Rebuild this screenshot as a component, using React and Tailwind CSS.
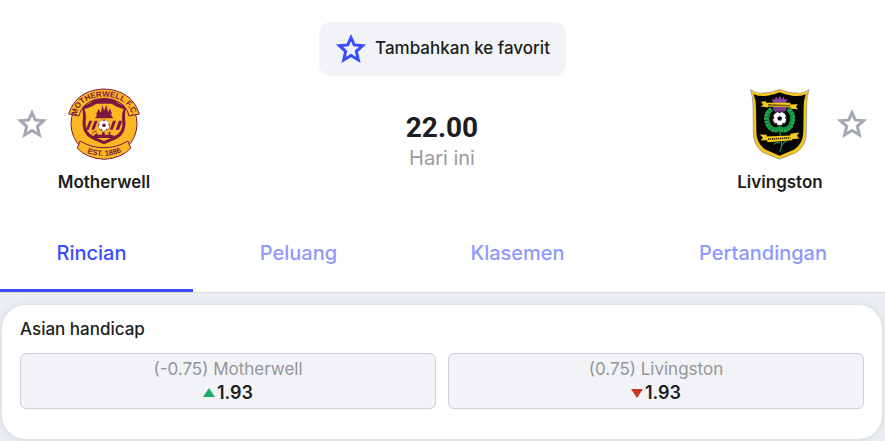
import React, { useState } from "react";

const TABS = ["Rincian", "Peluang", "Klasemen", "Pertandingan"];

function StarIcon({ className }) {
  return (
    <svg viewBox="0 0 30 30" className={className} fill="none" stroke="currentColor" strokeWidth="2.8" aria-hidden="true">
      <path d="M15 4.4 L18 11.2 L25.9 11.9 L20 17.2 L21.9 25.3 L15 21.1 L8.1 25.3 L10 17.2 L4.1 11.9 L12 11.2 Z" />
    </svg>
  );
}

function Ball({ x, y, r, color }) {
  return (
    <g transform={`translate(${x} ${y}) scale(${r / 20})`}>
      <circle r="20" fill="#fff" stroke={color} strokeWidth="1.5" />
      <path
        fill={color}
        d="M0 -7 L7 -2 L4 6 L-4 6 L-7 -2 Z M-6 -19 L6 -19 L0 -15 Z M19 -7 L20 4 L15 -3 Z M-19 -7 L-20 4 L-15 -3 Z M14 15 L6 19 L9 12 Z M-14 15 L-6 19 L-9 12 Z"
      />
    </g>
  );
}

function MotherwellCrest() {
  const dark = "#7d1742";
  const gold = "#fbb822";
  return (
    <svg viewBox="24 27 216 216" className="size-18" role="img" aria-label="Motherwell F.C.">
      <circle cx="132" cy="134" r="99" fill={gold} stroke={dark} strokeWidth="3" />
      <path d="M62 82 Q84 80 104 60 H160 Q180 80 202 82 Q192 96 196 126 Q200 166 164 182 L132 196 L100 182 Q64 166 68 126 Q72 96 62 82 Z" fill={dark} />
      <path d="M73 90 Q94 86 112 72 H152 Q170 86 191 90 Q184 104 187 128 Q190 160 160 174 L132 186 L104 174 Q74 160 77 128 Q80 104 73 90 Z" fill={gold} />
      <path d="M96 66 Q132 52 168 66 L156 74 H108 Z" fill={dark} />
      <path d="M105 118 L112 106 H108 L116 90 L122 101 L128 78 L132 96 L139 78 L144 100 L150 88 L156 105 H152 L160 118 Z" fill={dark} />
      <g fill={dark}>
        <path d="M77 152 L88 125 H97 L86 152 Z M94 152 L104 125 H113 L103 152 Z M149 152 L159 125 H168 L158 152 Z M167 152 L177 125 H187 L177 152 Z" />
        <path d="M98 173 L109 162 L114 167 H126 V160 H134 V167 H146 V158 H151 V167 L164 170 L158 177 H104 Z" />
      </g>
      <path d="M96 163 Q103 154 110 158" fill="none" stroke={dark} strokeWidth="3" />
      <Ball x={132} y={139} r={17} color={dark} />
      <path d="M26 105 Q49 33 132 30 Q215 33 238 105 L207 111 Q205 94 189 78 Q166 59 132 58 Q98 59 75 78 Q59 94 57 111 Z" fill={gold} stroke={dark} strokeWidth="3" />
      <path d="M60 186 Q96 207 132 206 Q168 207 204 186 L212 208 Q184 238 132 241 Q80 238 52 208 Z" fill={gold} stroke={dark} strokeWidth="3" />
      <path id="crest-top" d="M50 109 Q60 56 132 53 Q204 56 216 109" fill="none" />
      <path id="crest-bottom" d="M76 220 Q132 243 190 217" fill="none" />
      <text fill={dark} fontSize="24" fontWeight="700" fontFamily="Liberation Sans, sans-serif" textAnchor="middle">
        <textPath href="#crest-top" startOffset="50%">MOTHERWELL F.C.</textPath>
      </text>
      <text fill={dark} fontSize="23" fontWeight="700" fontFamily="Liberation Sans, sans-serif" textAnchor="middle">
        <textPath href="#crest-bottom" startOffset="50%">EST. 1886</textPath>
      </text>
    </svg>
  );
}

function LivingstonCrest() {
  return (
    <svg viewBox="32 25 180 213" className="h-18 w-15" role="img" aria-label="Livingston">
      <path d="M33 28 Q49 41 66 39 Q94 39 121 28 Q148 39 176 39 Q193 41 209 28 Q202 48 202 78 L201 155 Q202 196 171 217 L121 237 L71 217 Q41 196 42 155 L41 78 Q41 48 33 28 Z" fill="#f4c51d" stroke="#8a8a80" strokeWidth="2" />
      <path d="M43 42 Q61 50 84 47 Q106 43 121 36 Q136 43 158 47 Q181 50 199 42 Q193 60 193 82 L192 155 Q192 190 165 208 L121 227 L78 208 Q51 190 51 155 L50 82 Q50 60 43 42 Z" fill="#050505" />
      <path d="M98 55 L106 59 L110 49 L116 57 L121 47 L127 57 L133 49 L136 59 L144 55 Q141 68 137 73 H105 Q100 67 98 55 Z" fill="#8746a0" />
      <path d="M102 78 H141 Q145 90 134 95 H108 Q97 90 102 78 Z" fill="#75398f" />
      <path d="M97 87 Q70 104 88 139 Q105 157 121 146 Q137 157 154 139 Q172 104 145 87" fill="none" stroke="#22a84c" strokeWidth="13" strokeDasharray="9 1" />
      <path d="M98 89 Q78 108 93 136 Q107 151 121 140 Q135 151 149 136 Q164 108 144 89" fill="none" stroke="#15913d" strokeWidth="6" />
      <path d="M119 148 Q127 178 127 194 Q127 207 121 215 M121 188 Q110 185 103 192 M126 197 Q134 184 143 181" fill="none" stroke="#188344" strokeWidth="4" />
      <Ball x={121} y={115} r={21} color="#050505" />
      <path d="M64 65 L80 63 L80 68 H153 V73 L176 72 L170 80 L176 87 L154 86 V82 L87 79 V82 L64 78 L72 73 Z" fill="#f6cb1b" />
      <path d="M61 163 L82 164 V169 L153 166 V161 L180 157 L173 167 L180 175 L158 177 V180 L84 186 V180 L64 181 L71 173 Z" fill="#f6cb1b" />
      <path d="M87 74 L151 77 M86 177 L153 173" stroke="#382c05" strokeWidth="5" strokeDasharray="4 2" />
    </svg>
  );
}

function Team({ name, crest, reversed }) {
  return (
    <div className={reversed ? "flex flex-row-reverse" : "flex"}>
      <button type="button" aria-label={`Favorit ${name}`} className="mt-5 flex h-8 w-8 items-center justify-center text-[#a3a8b4]">
        <StarIcon className="size-8" />
      </button>
      <div className="flex w-28 flex-col items-center gap-2">
        {crest}
        <h2 className="text-[17px] leading-7 font-semibold">{name}</h2>
      </div>
    </div>
  );
}

function Odds({ label, value, up }) {
  return (
    <button type="button" className="flex h-14 flex-col items-center justify-center rounded-md border border-[#cfd1d8] bg-[#f2f3f7] leading-6">
      <span className="text-[17px] text-[#949599]">{label}</span>
      <span className="flex h-6 items-center gap-0.5 text-lg leading-6 font-semibold">
        <svg viewBox="0 0 12 10" className="h-2.5 w-3" aria-hidden="true">
          {up ? <path d="M6 0 L12 9 H0 Z" fill="#1cae68" /> : <path d="M0 1 H12 L6 10 Z" fill="#cc3520" />}
        </svg>
        {value}
      </span>
    </button>
  );
}

export default function App() {
  const [active, setActive] = useState("Rincian");
  return (
    <div className="min-h-screen bg-[#ebeef3] font-[Inter,Roboto,sans-serif] text-[#1c1d21]">
      <header className="border-b border-[#d9dadd] bg-white pt-[22px]">
        <div className="flex justify-center">
          <button type="button" className="flex h-[54px] items-center gap-2 rounded-xl bg-[#f2f3f7] px-4 text-[17px] font-medium">
            <StarIcon className="size-8 text-[#384eff]" />
            Tambahkan ke favorit
          </button>
        </div>
        <div className="flex items-start justify-between pt-3 pr-[17px] pl-4">
          <Team name="Motherwell" crest={<MotherwellCrest />} />
          <div className="flex flex-col items-center pt-6">
            <time className="font-[Roboto,sans-serif] text-[28px] leading-8 font-bold">22.00</time>
            <span className="text-xl leading-7 text-[#999a9e]">Hari ini</span>
          </div>
          <Team name="Livingston" crest={<LivingstonCrest />} reversed />
        </div>
        <nav className="mt-4 grid h-20 grid-cols-[193fr_211fr_227fr_254fr]">
          {TABS.map((tab) => (
            <button
              key={tab}
              type="button"
              onClick={() => setActive(tab)}
              className={`border-b-3 pt-1 text-xl font-medium first:pr-2.5 last:pl-2.5 ${
                active === tab ? "border-[#384eff] text-[#384eff]" : "border-transparent text-[#8d99ff]"
              }`}
            >
              {tab}
            </button>
          ))}
        </nav>
      </header>
      <main className="pt-3 pr-[3px] pb-0.5 pl-0.5">
        <section className="rounded-3xl bg-white px-[18px] pt-2.5 pb-[30px] shadow-[0_1px_8px_rgba(40,50,80,0.12)]">
          <h3 className="text-[17px] leading-7 font-medium">Asian handicap</h3>
          <div className="mt-2.5 grid grid-cols-2 gap-3">
            <Odds label="(-0.75) Motherwell" value="1.93" up />
            <Odds label="(0.75) Livingston" value="1.93" />
          </div>
        </section>
      </main>
    </div>
  );
}
